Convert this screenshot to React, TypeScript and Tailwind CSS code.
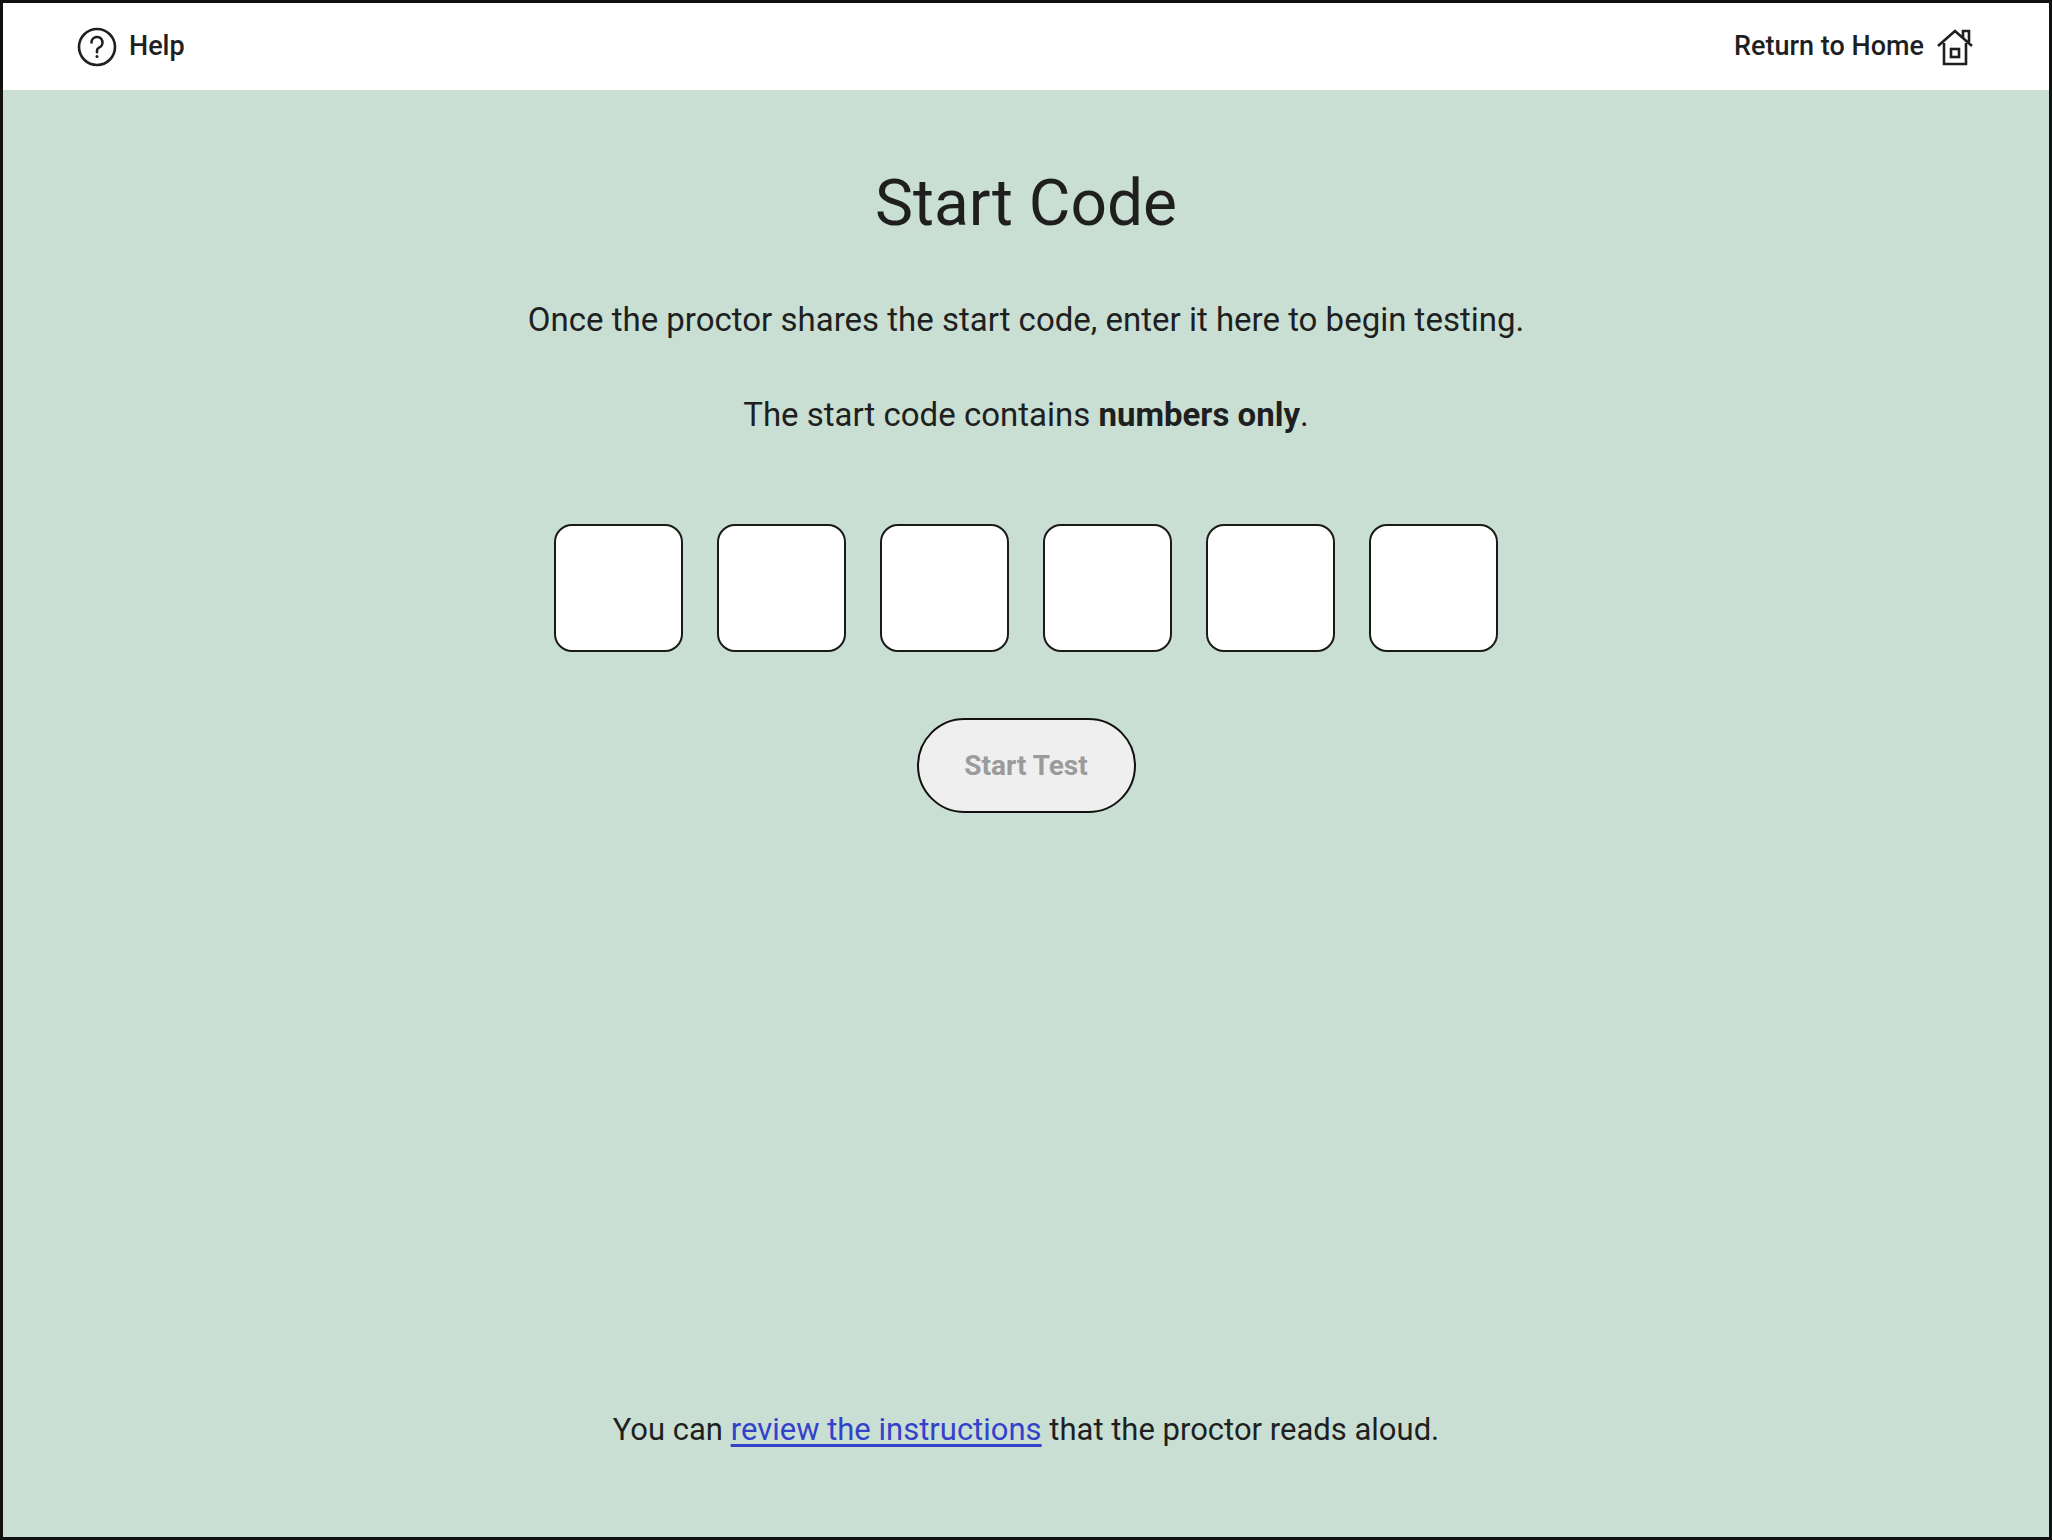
import { useState } from "react";

const HelpIcon = () => (
  <svg width="40" height="40" viewBox="0 0 40 40" fill="none" stroke="#1f1f1f" strokeWidth="2.6">
    <circle cx="20" cy="20" r="18" />
    <path d="M14.5 15.5a5.5 5.5 0 1 1 7.5 5.1c-1.3.6-2 1.6-2 3v1.6" strokeLinecap="round" />
    <circle cx="20" cy="29.5" r="1.5" fill="#1f1f1f" stroke="none" />
  </svg>
);

const HomeIcon = () => (
  <svg width="38" height="40" viewBox="0 0 38 40" fill="none" stroke="#1f1f1f" strokeWidth="2.6" strokeLinejoin="miter">
    <path d="M2 19 L19 4 L36 19" />
    <path d="M27 11 V4 H33 V15" />
    <path d="M8 16 V37 H30 V16" />
    <rect x="15" y="22" width="8" height="8" />
  </svg>
);

export default function App() {
  const [code, setCode] = useState(["", "", "", "", "", ""]);
  const ready = code.every((c) => c !== "");

  return (
    <div className="h-[1540px] w-full flex flex-col border-[3px] border-[#111] bg-[#c9dfd4] font-[family-name:Roboto,sans-serif] text-[#1f1f1f]">
      <header className="h-[87px] shrink-0 bg-white flex items-center justify-between pl-[74px] pr-[75px]">
        <button className="flex items-center gap-[12px] text-[27px] font-medium">
          <HelpIcon />
          <span>Help</span>
        </button>
        <button className="flex items-center gap-[12px] text-[27px] font-medium">
          <span>Return to Home</span>
          <HomeIcon />
        </button>
      </header>

      <main className="flex-1 flex flex-col items-center">
        <h1 className="mt-[72px] text-[64px] leading-[84px]">Start Code</h1>
        <p className="mt-[52px] text-[33px] leading-[44px]">
          Once the proctor shares the start code, enter it here to begin testing.
        </p>
        <p className="mt-[51px] text-[33px] leading-[44px]">
          The start code contains <strong className="font-bold">numbers only</strong>.
        </p>

        <div className="mt-[87px] flex gap-[34px]">
          {code.map((c, i) => (
            <input
              key={i}
              value={c}
              inputMode="numeric"
              maxLength={1}
              onChange={(e) => {
                const v = e.target.value.replace(/\D/g, "");
                setCode((prev) => prev.map((p, j) => (j === i ? v : p)));
              }}
              className="w-[129px] h-[128px] rounded-[18px] border-2 border-[#1a1a1a] bg-white text-center text-[48px] outline-none"
            />
          ))}
        </div>

        <button
          disabled={!ready}
          className="mt-[66px] w-[219px] h-[95px] rounded-full border-2 border-[#111] bg-[#efefef] text-[28px] font-bold text-[#9b9b9b]"
        >
          Start Test
        </button>

        <div className="flex-1" />

        <p className="mb-[86px] text-[31px] leading-[42px]">
          You can{" "}
          <a href="#" className="text-[#3441c9] underline underline-offset-4">
            review the instructions
          </a>{" "}
          that the proctor reads aloud.
        </p>
      </main>
    </div>
  );
}
